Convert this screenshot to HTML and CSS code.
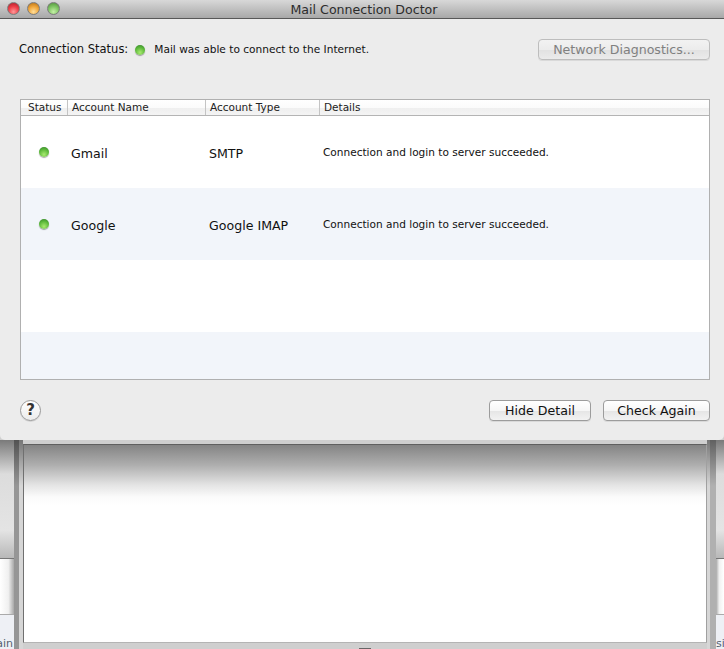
FILE: index.html
```html
<!DOCTYPE html>
<html lang="en">
<head>
<meta charset="utf-8">
<title>Mail Connection Doctor</title>
<link rel="stylesheet" href="styles.css">
</head>
<body>
<div class="screen">
  <section class="dialog">
    <header class="titlebar">
      <div class="lights">
        <span class="light red"></span>
        <span class="light amber"></span>
        <span class="light green"></span>
      </div>
      <div class="title">Mail Connection Doctor</div>
    </header>
    <div class="status-bar">
      <span class="status-label">Connection Status:</span>
      <span class="dot small"></span>
      <span class="status-text">Mail was able to connect to the Internet.</span>
      <button class="btn diag" disabled>Network Diagnostics...</button>
    </div>
    <div class="table">
      <div class="thead">
        <div class="th c1">Status</div>
        <div class="th c2">Account Name</div>
        <div class="th c3">Account Type</div>
        <div class="th c4">Details</div>
      </div>
      <div class="row">
        <div class="cell-dot"><span class="dot"></span></div>
        <div class="name">Gmail</div>
        <div class="type">SMTP</div>
        <div class="detail">Connection and login to server succeeded.</div>
      </div>
      <div class="row alt">
        <div class="cell-dot"><span class="dot"></span></div>
        <div class="name">Google</div>
        <div class="type">Google IMAP</div>
        <div class="detail">Connection and login to server succeeded.</div>
      </div>
      <div class="row"></div>
      <div class="row alt short"></div>
    </div>
    <footer class="actions">
      <button class="help">?</button>
      <button class="btn hide">Hide Detail</button>
      <button class="btn check">Check Again</button>
    </footer>
  </section>
  <section class="behind">
    <div class="side leftside">
      <div class="band band-a"></div>
      <div class="band band-b"></div>
      <div class="band band-c"><span class="peek peek-l">tain</span></div>
    </div>
    <div class="gutter"></div>
    <div class="well"></div>
    <div class="gutter right"></div>
    <div class="side rightside">
      <div class="band band-a"></div>
      <div class="band band-b"></div>
      <div class="band band-c"><span class="peek">si</span></div>
    </div>
    <span class="marker"></span>
  </section>
</div>
</body>
</html>
```
FILE: styles.css
```css
* { box-sizing: border-box; }
html, body { margin: 0; padding: 0; }
body { font-family: "DejaVu Sans", "Liberation Sans", sans-serif; background: #d8d8d8; }
.screen { width: 724px; height: 649px; overflow: hidden; display: flex; flex-direction: column; position: relative; background: #cfcfcf; }

.dialog { height: 440px; flex: none; background: #ececec; border-radius: 0 0 5px 5px; position: relative; z-index: 1; display: flex; flex-direction: column; }
.titlebar { height: 19px; flex: none; background: linear-gradient(#d8d8d8, #a8a8a8); border-bottom: 1px solid #585858; position: relative; display: flex; align-items: center; justify-content: center; }
.lights { position: absolute; left: 7px; top: 2px; display: flex; gap: 7px; }
.light { width: 13px; height: 13px; border-radius: 50%; border: 1px solid #7c7c7c; }
.red { background: radial-gradient(circle at 50% 80%, #ff9a9a, #ee3f48 50%, #a81c28); }
.amber { background: radial-gradient(circle at 50% 80%, #ffdf9c, #f0a63a 50%, #b06c14); }
.green { background: radial-gradient(circle at 50% 80%, #c6f0a8, #80c664 50%, #4c8c38); }
.title { font-size: 12.6px; color: #2c2c2c; line-height: 17px; margin-left: 4px; }

.status-bar { height: 80px; flex: none; display: flex; align-items: flex-start; padding: 20px 14px 0 19px; }
.status-label { font-size: 11.5px; line-height: 21px; color: #111; margin-right: 7px; }
.status-text { font-size: 10.6px; line-height: 21px; color: #111; margin-left: 9px; }
.dot { display: block; width: 10px; height: 10px; border-radius: 50%; background: radial-gradient(circle at 50% 75%, #a8ea70, #5cb83a 55%, #2f7f2a); box-shadow: 0 1px 1px rgba(0,0,0,.35); }
.dot.small { margin-top: 6px; }

.btn { font-family: inherit; font-size: 12.6px; height: 21px; padding: 0; color: #111; border: 1px solid #9c9c9c; border-radius: 4px; background: linear-gradient(#ffffff, #f6f6f6 50%, #e6e6e6 55%, #f2f2f2); box-shadow: 0 1px 0 rgba(0,0,0,.08); }
.diag { margin-left: auto; width: 172px; color: #808080; border-color: #bdbdbd; background: linear-gradient(#f2f2f2, #ececec 50%, #e2e2e2 55%, #ebebeb); }

.table { width: 690px; height: 281px; flex: none; margin-left: 20px; border: 1px solid #b0b0b0; background: #fff; display: flex; flex-direction: column; overflow: hidden; }
.thead { height: 16px; flex: none; display: grid; grid-template-columns: 47px 138px 114px 1fr; background: linear-gradient(#ffffff, #fbfbfb 50%, #efefef 55%, #f4f4f4); border-bottom: 1px solid #b4b4b4; }
.th { font-size: 10.5px; line-height: 15px; color: #222; padding-left: 4px; }
.th.c1 { padding-left: 7px; }
.th.c1, .th.c2, .th.c3 { border-right: 1px solid #c4c4c4; }
.row { height: 72px; flex: none; display: grid; grid-template-columns: 47px 138px 114px 1fr; align-items: center; }
.row.alt { background: #f2f5fa; }
.row.short { height: 47px; }
.cell-dot { display: flex; justify-content: center; padding-right: 1px; }
.name, .type { font-size: 12.6px; color: #111; padding-left: 3px; padding-top: 3px; }
.detail { font-size: 10.55px; color: #111; padding-left: 3px; padding-bottom: 1px; }

.actions { flex: 1; display: flex; align-items: center; padding: 0 14px 0 20px; gap: 12px; }
.help { width: 21px; height: 21px; padding: 0; border-radius: 50%; border: 1px solid #9a9a9a; background: linear-gradient(#ffffff, #ececec); font-family: inherit; font-size: 15px; font-weight: bold; line-height: 18px; color: #333; margin-right: auto; box-shadow: 0 1px 0 rgba(0,0,0,.1); }
.hide { width: 102px; }
.check { width: 107px; }

.behind { flex: 1; display: flex; background: #cfcfcf; position: relative; }
.side { width: 14px; flex: none; display: flex; flex-direction: column; overflow: hidden; }
.rightside { width: 8px; }
.band-a { height: 118px; background: linear-gradient(#7a7a7a, #dcdcdc 34px, #e4e4e4 90px, #b8b8b8); }
.band-b { height: 57px; background: linear-gradient(90deg, #fff, #f0f0f0 60%, #a8a8a8); border-top: 1px solid #777; border-bottom: 1px solid #aaa; }
.rightside .band-b { background: linear-gradient(270deg, #fff, #f0f0f0 60%, #a8a8a8); }
.band-c { flex: 1; background: #eef0f5; position: relative; }
.peek { position: absolute; left: 0; top: 23px; font-size: 11px; line-height: 12px; color: #556070; }
.peek-l { left: -8px; }
.gutter { width: 9px; flex: none; background: linear-gradient(rgba(0,0,0,.45), rgba(0,0,0,0) 46px), linear-gradient(90deg, #969696 5px, #d6d6d6 5px); }
.gutter.right { width: 9px; background: linear-gradient(rgba(0,0,0,.45), rgba(0,0,0,0) 46px), linear-gradient(90deg, #d6d6d6 3px, #b0b0b0 3px); }
.well { flex: 1; margin: 4px 0 6px; background: linear-gradient(#848484, #aeaeae 20px, #e4e4e4 40px, #fbfbfb 52px, #ffffff 60px); border: 1px solid #b4b4b4; border-top-color: #606060; border-left-color: #707070; border-right-color: #a0a0a0; }
.marker { position: absolute; left: 359px; bottom: 0; width: 12px; height: 1px; background: #666; }
```
